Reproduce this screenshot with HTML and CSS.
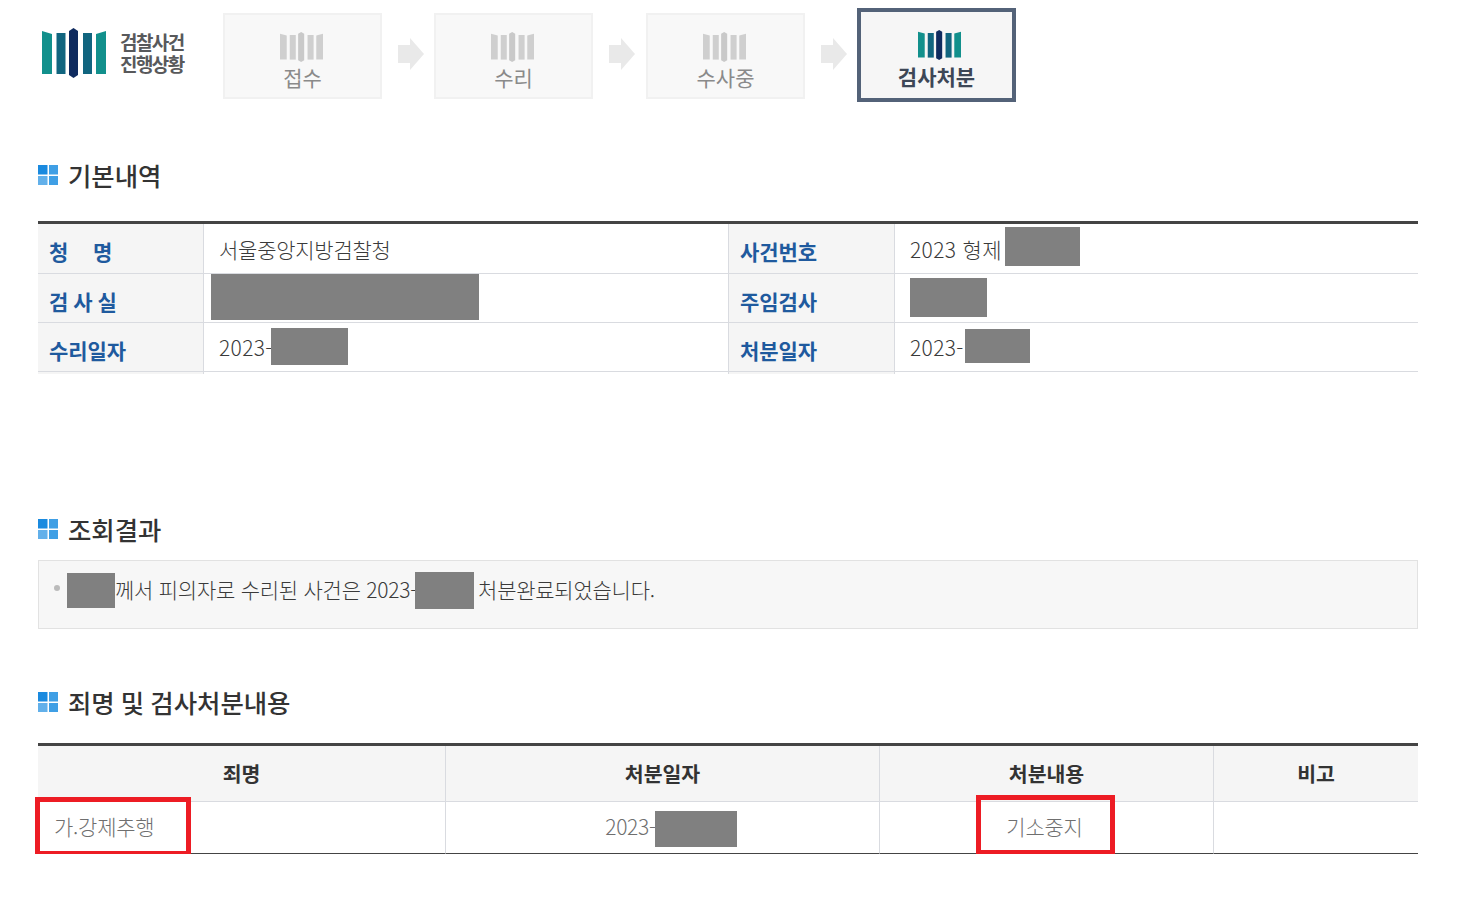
FILE: index.html
```html
<!DOCTYPE html>
<html lang="ko">
<head>
  <meta charset="UTF-8" />
  <meta name="viewport" content="width=device-width, initial-scale=1.0" />
  <title>검찰사건 진행상황</title>
  <link rel="stylesheet" href="styles.css">
</head>
<body>

<!-- shared mark for the logo and the four steps -->
<svg class="defs" width="0" height="0" aria-hidden="true">
  <symbol id="bars" viewBox="0 0 64 50" preserveAspectRatio="none">
    <path class="bar-a" d="M0 3 L10 6 V46 H0 Z" />
    <path class="bar-b" d="M14.5 5 H23.5 V46 H14.5 Z" />
    <path class="bar-c" d="M27 3 L31.5 0 L36 3 V47 L31.5 50 L27 47 Z" />
    <path class="bar-b" d="M41 5 H50 V46 H41 Z" />
    <path class="bar-a" d="M54 6 L64 3 V46 H54 Z" />
  </symbol>
</svg>

<div class="page">

  <div class="progress">
    <div class="logo">
      <svg class="logo-mark"><use href="#bars" /></svg>
      <div class="logo-text"><span>검찰사건</span><span>진행상황</span></div>
    </div>
    <div class="steps">
      <div class="step"><svg class="step-mark"><use href="#bars" /></svg><span>접수</span></div>
      <svg class="arrow" viewBox="0 0 26 32"><path d="M0 7 H12 V0 L26 16 L12 32 V25 H0 Z" /></svg>
      <div class="step"><svg class="step-mark"><use href="#bars" /></svg><span>수리</span></div>
      <svg class="arrow mid" viewBox="0 0 26 32"><path d="M0 7 H12 V0 L26 16 L12 32 V25 H0 Z" /></svg>
      <div class="step"><svg class="step-mark"><use href="#bars" /></svg><span>수사중</span></div>
      <svg class="arrow" viewBox="0 0 26 32"><path d="M0 7 H12 V0 L26 16 L12 32 V25 H0 Z" /></svg>
      <div class="step active"><svg class="step-mark"><use href="#bars" /></svg><span>검사처분</span></div>
    </div>
  </div>

  <h2 class="title first">기본내역</h2>
  <table class="info">
    <colgroup><col class="c-th"><col class="c-td"><col class="c-th"><col></colgroup>
    <tr class="top-row">
      <th class="wide">청&nbsp;&nbsp;&nbsp;&nbsp;명</th>
      <td>서울중앙지방검찰청</td>
      <th>사건번호</th>
      <td class="num">2023 형제<i class="mask m-case"></i></td>
    </tr>
    <tr>
      <th class="tight">검 사 실</th>
      <td><i class="mask m-room"></i></td>
      <th>주임검사</th>
      <td><i class="mask m-prosecutor"></i></td>
    </tr>
    <tr class="end-row">
      <th>수리일자</th>
      <td class="num">2023-<i class="mask m-received"></i></td>
      <th>처분일자</th>
      <td class="num">2023-<i class="mask m-disposed"></i></td>
    </tr>
  </table>

  <h2 class="title second">조회결과</h2>
  <div class="result">
    <i class="mask m-name"></i>
    <i class="mask m-date"></i>
    <p>께서 피의자로 수리된 사건은 2023-<span class="gap"></span>처분완료되었습니다.</p>
  </div>

  <h2 class="title third">죄명 및 검사처분내용</h2>
  <table class="charges">
    <colgroup><col class="c1"><col class="c2"><col class="c3"><col></colgroup>
    <thead>
      <tr><th>죄명</th><th>처분일자</th><th>처분내용</th><th>비고</th></tr>
    </thead>
    <tbody>
      <tr>
        <td class="left">가.강제추행<i class="mark mark-crime"></i></td>
        <td><span class="date">2023-</span><i class="mask m-row"></i></td>
        <td class="shift">기소중지<i class="mark mark-result"></i></td>
        <td></td>
      </tr>
    </tbody>
  </table>

</div>

</body>
</html>
```

FILE: styles.css
```css
* { box-sizing:border-box; margin:0; padding:0; }
body { font-family:"Noto Sans CJK KR","Noto Sans",sans-serif; background:#fff; color:#333; }
.defs { position:absolute; }
.page { width:1380px; margin-left:38px; }

/* top progress strip */
.progress { display:flex; height:110px; padding-top:8px; }
.logo { display:flex; width:185px; align-items:flex-start; padding:20px 0 0 4px; }
.logo-mark { width:64px; height:50px; --a:#12908c; --b:#11657f; --c:#0f2b5f; }
.logo-text { margin:5px 0 0 14px; font-family:"Liberation Sans","Noto Sans CJK KR",sans-serif; font-size:19px; font-weight:700; letter-spacing:-1.6px; color:#58595b; }
.logo-text span { display:block; height:22px; line-height:22px; }
.steps { display:flex; align-items:center; height:94px; }
.step { display:flex; flex-direction:column; align-items:center; width:159px; height:86px; margin-top:2px; padding-top:17px;
        background:#f8f8f8; border:2px solid #f1f1f1; --a:#cfcfcf; --b:#cfcfcf; --c:#c9c9c9;
        font-size:21px; line-height:30px; color:#8a8a8a; }
.step-mark { width:43px; height:30px; margin-right:2px; }
.step.active { height:94px; margin-top:0; padding-top:18px; background:#f6f6f6; border:4px solid #536278;
               --a:#12908c; --b:#11657f; --c:#0f2b5f; color:#3d4756; font-weight:700; }
.step.active .step-mark { margin:0 0 1px 6px; }
.arrow { flex:none; width:26px; height:32px; margin:0 10px 2px 16px; fill:#e9e9e9; }
.arrow.mid { margin-right:11px; }

.bar-a { fill:var(--a); }
.bar-b { fill:var(--b); }
.bar-c { fill:var(--c); }

/* section titles */
.title { display:flex; align-items:center; gap:10px; height:36px; font-size:25.4px; font-weight:500; line-height:36px; color:#333; }
.title::before { content:""; width:20px; height:20px; flex:none;
                 background:
                   linear-gradient(#1a8adf,#1a8adf) 0 0/9.5px 9.5px no-repeat,
                   linear-gradient(#3f9fe5,#3f9fe5) 10.5px 0/9.5px 9.5px no-repeat,
                   linear-gradient(#62b0ea,#62b0ea) 0 10.5px/9.5px 9.5px no-repeat,
                   linear-gradient(#3f9fe5,#3f9fe5) 10.5px 10.5px/9.5px 9.5px no-repeat; }
.title.first { margin-top:47px; }
.title.second { margin-top:139px; }
.title.third { margin-top:55px; word-spacing:-1px; }

/* redaction boxes and review marks sit on top of the text */
.mask { position:absolute; background:#808080; }
.mark { position:absolute; border:5px solid #ed1c24; }

/* basic info */
table { width:100%; border-collapse:separate; border-spacing:0; table-layout:fixed; }
.info { margin-top:28px; border-top:3px solid #444; }
.c-th { width:166px; }
.c-td { width:525px; }
.info th, .info td { position:relative; height:49px; border-bottom:1px solid #d9dbe0; font-size:21px; }
.info .top-row th, .info .top-row td { height:50px; }
.info th { padding:5px 0 0 11px; background:#f5f5f5; border-right:1px solid #d9dbe0; text-align:left; font-weight:700; color:#1f5a9e; letter-spacing:-.1px; }
.info th.wide { letter-spacing:.25px; }
.info th.tight { letter-spacing:-.5px; }
.info td { padding-left:15px; color:#3a3a3a; font-weight:300; letter-spacing:-.25px; }
.info td.num { letter-spacing:.35px; }
.info td:nth-child(2) { border-right:1px solid #d9dbe0; }
/* cell background pokes out under the last row line */
.end-row th::after { content:""; position:absolute; left:0; right:-1px; top:calc(100% + 1px); height:2px; background:#f5f5f5; border-right:1px solid #d9dbe0; }
.end-row th:nth-child(3)::after { box-shadow:-1px 0 0 #d9dbe0; }
.m-case { left:110px; top:3px; width:75px; height:39px; }
.m-room { left:7px; top:0; width:268px; height:46px; }
.m-prosecutor { left:15px; top:4px; width:77px; height:39px; }
.m-received { left:67px; top:5px; width:77px; height:37px; }
.m-disposed { left:70px; top:6px; width:65px; height:34px; }

/* result box */
.result { position:relative; margin-top:13px; height:69px; padding:13px 0 0 76px; background:#f7f7f7; border:1px solid #e2e2e2; font-size:21px; font-weight:300; line-height:30px; letter-spacing:-.25px; color:#3a3a3a; }
.result::before { content:""; position:absolute; left:15px; top:24px; width:6px; height:6px; border-radius:50%; background:#bbb; }
.gap { display:inline-block; width:61px; }
.m-name { left:28px; top:12px; width:48px; height:35px; }
.m-date { left:376px; top:11px; width:59px; height:37px; }

/* charges table */
.charges { margin-top:23px; border-top:3px solid #444; }
.c1 { width:408px; }
.c2 { width:434px; }
.c3 { width:334px; }
.charges th { height:56px; padding-bottom:2px; background:#f5f5f5; border-bottom:1px solid #d9dbe0; border-right:1px solid #d9dbe0; font-size:20.5px; font-weight:700; color:#333; }
.charges th:last-child, .charges td:last-child { border-right:0; }
.charges td { position:relative; height:52px; padding-bottom:4px; border-bottom:1px solid #444; border-right:1px solid #d9dbe0; font-size:21px; font-weight:300; letter-spacing:-.25px; color:#6f6f6f; text-align:center; }
.charges td.left { text-align:left; padding-left:16px; }
.charges td.shift { padding-right:4px; }
.date { margin-right:64px; }
.m-row { left:209px; top:9px; width:82px; height:36px; }
.mark-crime { left:-3px; top:-5px; width:156px; height:59px; }
.mark-result { left:96px; top:-7px; width:139px; height:60px; }
```
